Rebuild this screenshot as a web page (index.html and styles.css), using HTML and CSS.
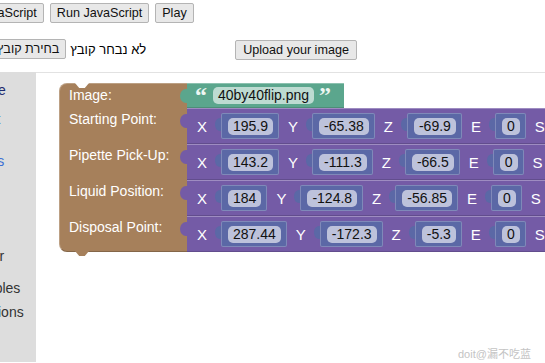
FILE: index.html
```html
<!DOCTYPE html>
<html lang="en">
<head>
    <meta charset="UTF-8">
    <title>Pipette blocks</title>
    <link rel="stylesheet" href="styles.css">
</head>
<body>
    <div class="toolbar">
        <button class="btn">Show JavaScript</button>
        <button class="btn">Run JavaScript</button>
        <button class="btn">Play</button>
    </div>
    <div class="filerow">
        <button class="btn">בחירת קובץ</button>
        <span class="file-name">לא נבחר קובץ</span>
        <button class="btn upload">Upload your image</button>
    </div>
    <div class="main">
        <div class="toolbox">
            <div class="cat navy">Device</div>
            <div class="cat blue">Robot</div>
            <div class="cat blue gap-md">Moves</div>
            <div class="cat gap-lg">Colour</div>
            <div class="cat gap-sm">Variables</div>
            <div class="cat gap-xs">Functions</div>
        </div>
        <div class="workspace">
            <div class="proc">
                <div class="label first">Image:</div>
                <div class="val">
                    <div class="text-block">
                        <span class="quote">&ldquo;</span>
                        <span class="field">40by40flip.png</span>
                        <span class="quote">&rdquo;</span>
                    </div>
                </div>

                <div class="label">Starting Point:</div>
                <div class="val">
                    <div class="xyz">
                        <span class="axis">X</span><span class="num"><span class="field">195.9</span></span>
                        <span class="axis">Y</span><span class="num"><span class="field">-65.38</span></span>
                        <span class="axis">Z</span><span class="num"><span class="field">-69.9</span></span>
                        <span class="axis">E</span><span class="num"><span class="field">0</span></span>
                        <span class="axis">S</span><span class="num"><span class="field">0</span></span>
                    </div>
                </div>

                <div class="label">Pipette Pick-Up:</div>
                <div class="val">
                    <div class="xyz">
                        <span class="axis">X</span><span class="num"><span class="field">143.2</span></span>
                        <span class="axis">Y</span><span class="num"><span class="field">-111.3</span></span>
                        <span class="axis">Z</span><span class="num"><span class="field">-66.5</span></span>
                        <span class="axis">E</span><span class="num"><span class="field">0</span></span>
                        <span class="axis">S</span><span class="num"><span class="field">0</span></span>
                    </div>
                </div>

                <div class="label">Liquid Position:</div>
                <div class="val">
                    <div class="xyz">
                        <span class="axis">X</span><span class="num"><span class="field">184</span></span>
                        <span class="axis">Y</span><span class="num"><span class="field">-124.8</span></span>
                        <span class="axis">Z</span><span class="num"><span class="field">-56.85</span></span>
                        <span class="axis">E</span><span class="num"><span class="field">0</span></span>
                        <span class="axis">S</span><span class="num"><span class="field">0</span></span>
                    </div>
                </div>

                <div class="label last">Disposal Point:</div>
                <div class="val">
                    <div class="xyz">
                        <span class="axis">X</span><span class="num"><span class="field">287.44</span></span>
                        <span class="axis">Y</span><span class="num"><span class="field">-172.3</span></span>
                        <span class="axis">Z</span><span class="num"><span class="field">-5.3</span></span>
                        <span class="axis">E</span><span class="num"><span class="field">0</span></span>
                        <span class="axis">S</span><span class="num"><span class="field">0</span></span>
                    </div>
                </div>
            </div>
        </div>
    </div>
    <div class="watermark">doit@漏不吃蓝</div>
</body>
</html>
```

FILE: styles.css
```css
html, body{
    margin:0;
    height:100%;
    overflow:hidden;
}
body{
    font-family:"Liberation Sans", "DejaVu Sans", Arial, sans-serif;
    background:#fff;
    color:#000;
    position:relative;
}
.btn{
    font-family:"Liberation Sans", "DejaVu Sans", Arial, sans-serif;
    font-size:12.6px;
    height:20px;
    padding:0 6px;
    margin:0;
    background:#e8e8e8;
    border:1px solid #b4b4b4;
    border-radius:2px;
    color:#111;
    white-space:nowrap;
}
.toolbar{
    display:flex;
    gap:6px;
    margin:3px 0 0 -64px;
}
.filerow{
    display:flex;
    align-items:center;
    margin:15px 0 0 -10px;
    font-size:13px;
}
.file-name{
    margin-left:4px;
}
.upload{
    margin-left:89px;
    padding:0 7px;
    margin-top:2px;
}
.main{
    display:flex;
    margin-top:12px;
    height:290px;
}
.toolbox{
    width:36px;
    flex:none;
    background:#dddddd;
    overflow:hidden;
    padding-top:7px;
    font-size:14px;
    color:#333;
}
.cat{
    margin-left:-37px;
    line-height:22px;
    height:22px;
    white-space:nowrap;
    margin-top:7px;
}
.cat:first-child{margin-top:0}
.navy{color:#1d2a6e}
.blue{color:#3b6fd4}
.gap-md{margin-top:20px}
.gap-lg{margin-top:73px}
.gap-sm{margin-top:10px}
.gap-xs{margin-top:2px}
.workspace{
    flex:1;
    border-top:1px solid #e2e2e2;
    padding:10px 0 0 23px;
    overflow:hidden;
}
.proc{
    display:grid;
    grid-template-columns:128px max-content;
}
.label{
    background:#a6805b;
    color:#fff;
    font-size:14px;
    line-height:16px;
    padding:3px 0 0 9px;
    white-space:nowrap;
    position:relative;
    border-left:1px solid rgba(255,255,255,0.25);
}
.label.first{
    border-top-left-radius:8px;
    border-top:1px solid rgba(255,255,255,0.25);
}
.label.first::before{
    content:"";
    position:absolute;
    top:-1px;
    left:15px;
    width:14px;
    height:5px;
    background:#fff;
    clip-path:polygon(0 0, 100% 0, 70% 100%, 30% 100%);
}
.label.last{
    border-bottom-left-radius:8px;
    border-bottom:1px solid rgba(0,0,0,0.2);
}
.label.last::after{
    content:"";
    position:absolute;
    bottom:-5px;
    left:15px;
    width:14px;
    height:5px;
    background:#a6805b;
    clip-path:polygon(0 0, 100% 0, 70% 100%, 30% 100%);
}
.val{
    display:flex;
}
.text-block, .xyz{
    position:relative;
    display:flex;
    align-items:center;
    border-top:1px solid rgba(255,255,255,0.3);
    border-bottom:1px solid rgba(0,0,0,0.15);
}
.text-block::before, .xyz::before{
    content:"";
    position:absolute;
    left:-7px;
    top:5px;
    width:7px;
    height:14px;
    border-radius:6px 0 0 6px / 7px 0 0 7px;
}
.text-block{
    background:#5ba68d;
    padding:3px 14px 3px 8px;
}
.text-block::before{background:#5ba68d}
.quote{
    color:#eef6f2;
    font-family:"Liberation Serif", serif;
    font-weight:bold;
    font-size:24px;
    line-height:17px;
    height:17px;
    margin:0 7px 0 0;
    letter-spacing:-1px;
}
.quote + .field + .quote{margin:0 0 0 5px}
.text-block .field{
    background:#bddbd1;
}
.xyz{
    background:#745ba6;
    padding:4px 0 4px 10px;
    flex:1;
}
.xyz::before{background:#745ba6}
.axis{
    color:#fff;
    font-size:15px;
    margin-right:14px;
}
.num{
    position:relative;
    background:#5b68a6;
    padding:4px 6px 4px 7px;
    border-radius:2px;
    margin-right:9px;
    box-shadow:inset 0 0 0 1px rgba(255,255,255,0.22);
}
.num::before{
    content:"";
    position:absolute;
    left:-6px;
    top:5px;
    width:6px;
    height:13px;
    background:#5b68a6;
    border-radius:5px 0 0 5px / 6px 0 0 6px;
}
.field{
    display:inline-block;
    background:#bdc2db;
    border-radius:5px;
    padding:0 5px;
    font-size:14px;
    line-height:17px;
    color:#111;
    white-space:nowrap;
}
.watermark{
    position:absolute;
    left:458px;
    top:345px;
    font-size:11px;
    color:#c4c4c4;
    font-family:"Liberation Sans", "Noto Sans CJK SC", sans-serif;
}
```
